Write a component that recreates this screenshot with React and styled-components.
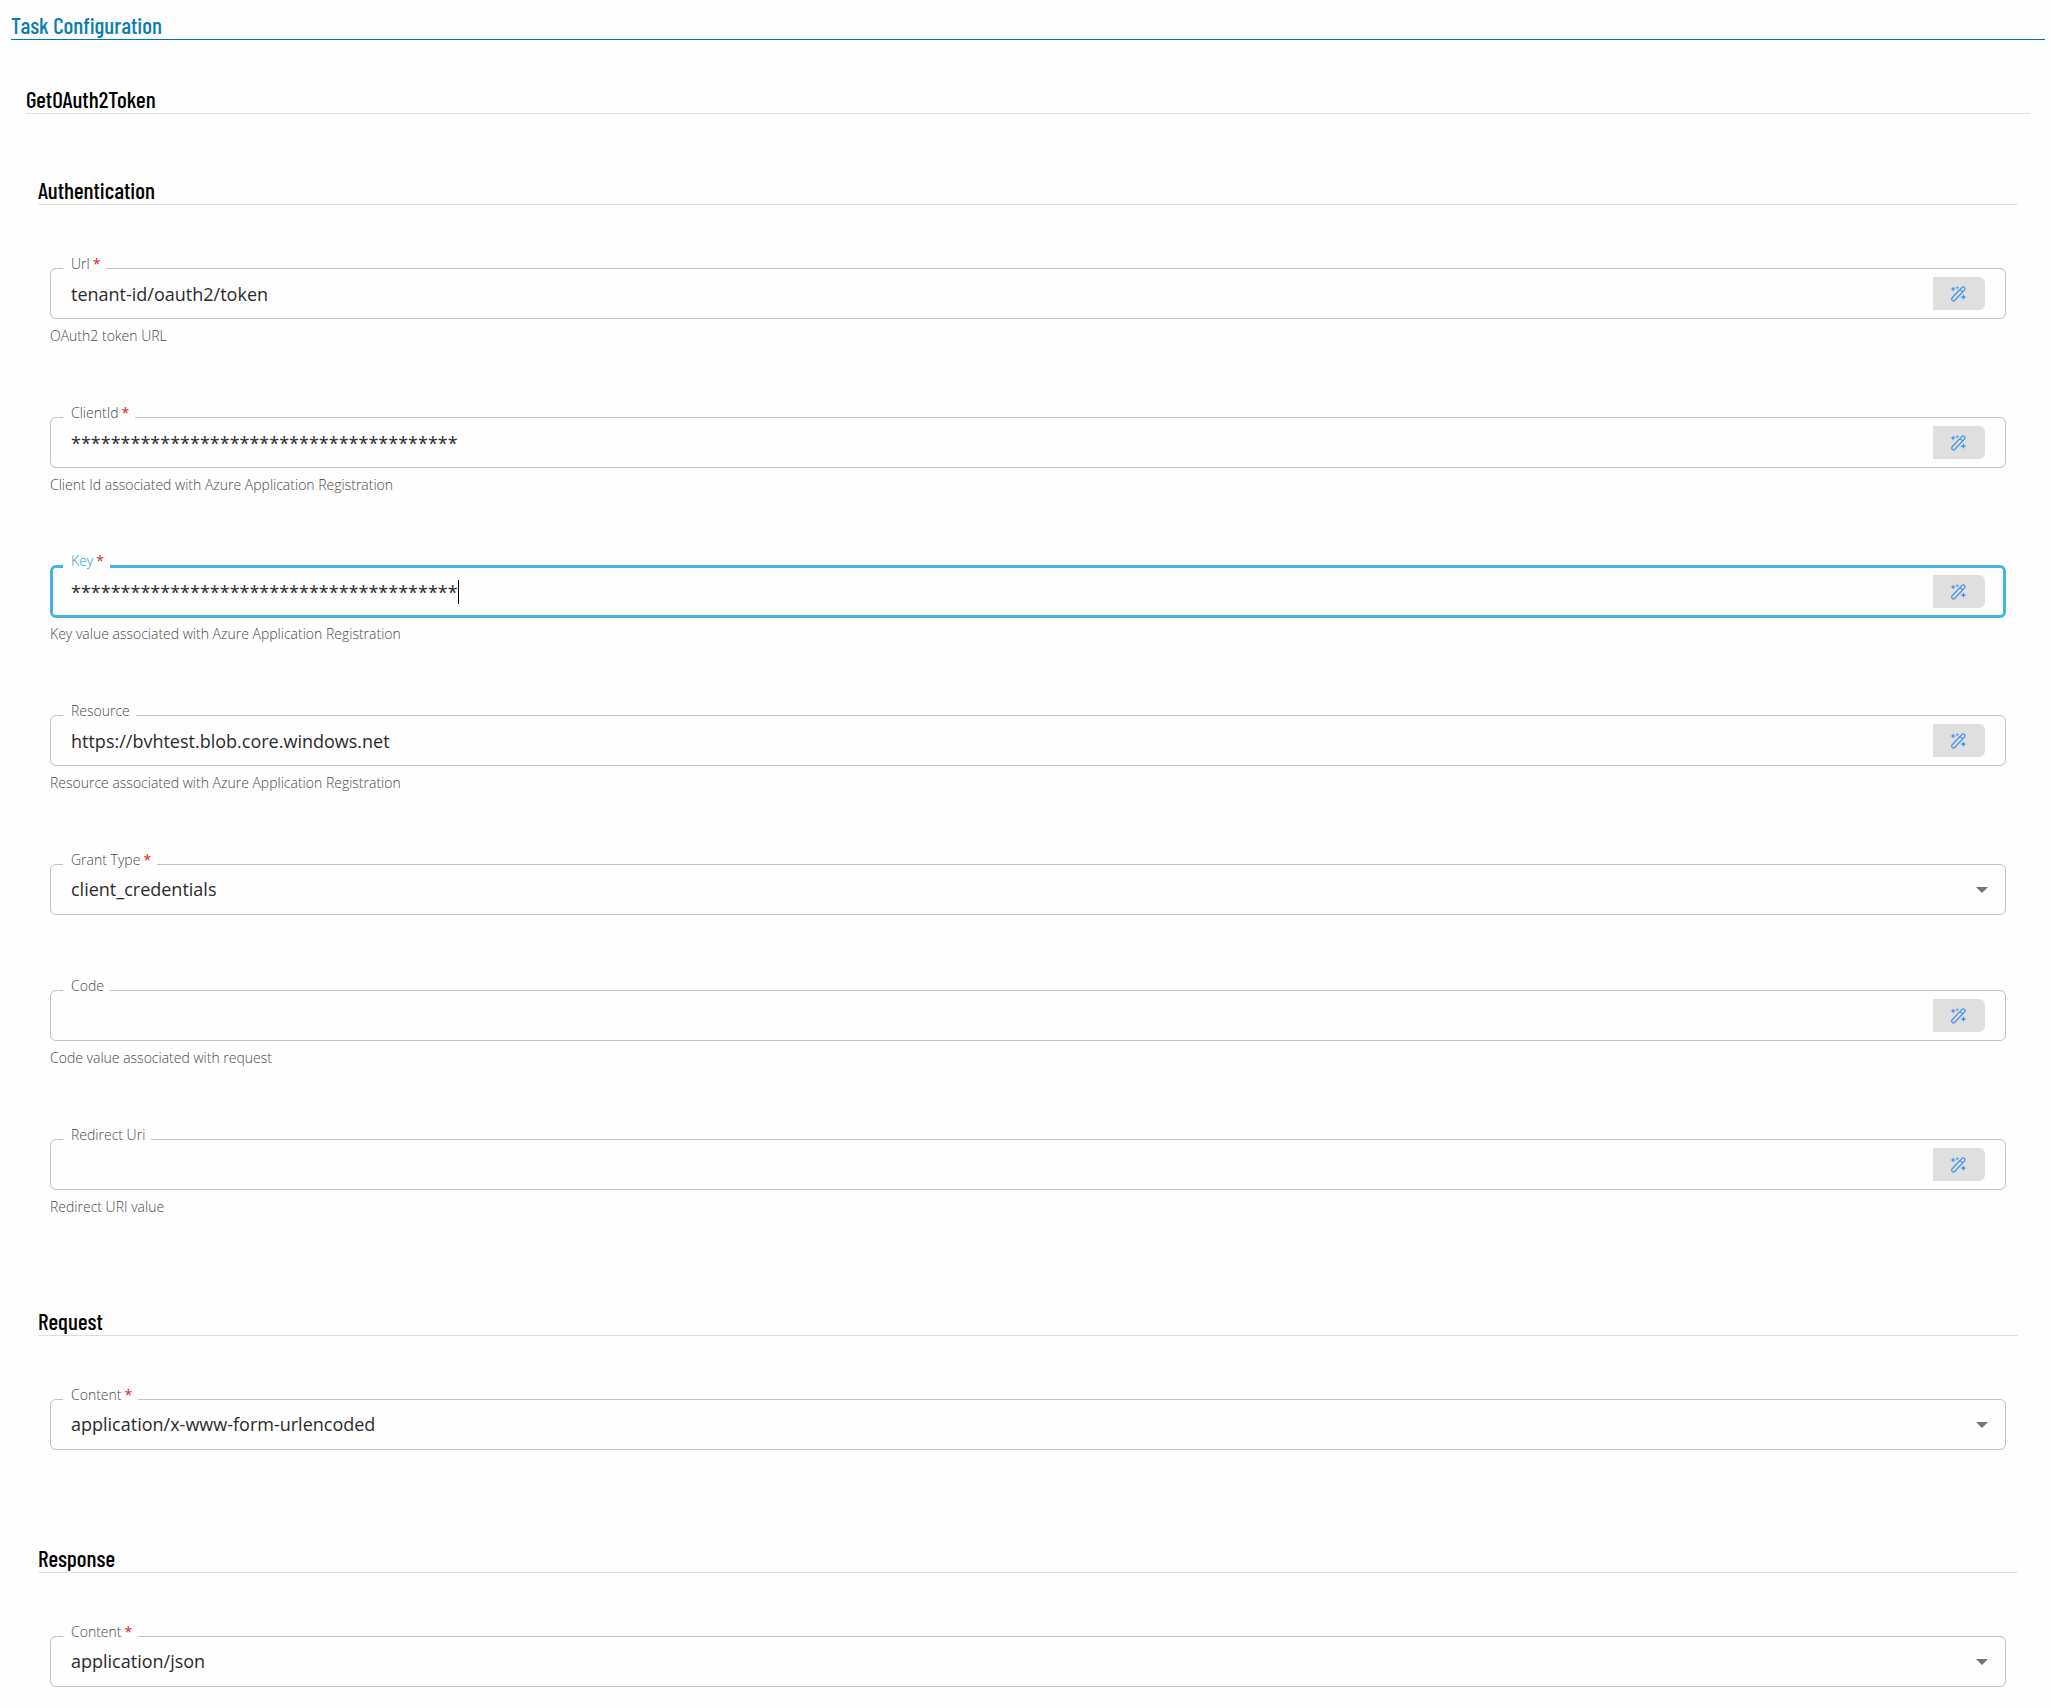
import React, { useState } from 'react';
import styled, { createGlobalStyle, css } from 'styled-components';

const authFields = [
    { id: 'url', label: 'Url', required: true, value: 'tenant-id/oauth2/token', hint: 'OAuth2 token URL' },
    { id: 'clientId', label: 'ClientId', required: true, value: '*'.repeat(39), hint: 'Client Id associated with Azure Application Registration' },
    { id: 'key', label: 'Key', required: true, value: '*'.repeat(39), hint: 'Key value associated with Azure Application Registration' },
    { id: 'resource', label: 'Resource', value: 'https://bvhtest.blob.core.windows.net', hint: 'Resource associated with Azure Application Registration' },
    { id: 'grantType', label: 'Grant Type', required: true, options: ['client_credentials', 'authorization_code'] },
    { id: 'code', label: 'Code', value: '', hint: 'Code value associated with request' },
    { id: 'redirectUri', label: 'Redirect Uri', value: '', hint: 'Redirect URI value' },
];

const requestFields = [
    { id: 'requestContent', label: 'Content', required: true, options: ['application/x-www-form-urlencoded', 'application/json'] },
];

const responseFields = [
    { id: 'responseContent', label: 'Content', required: true, options: ['application/json', 'application/xml'] },
];

const WandIcon = () => (
    <svg width="16" height="16" viewBox="0.4 0.3 16 16" fill="none" stroke="currentColor" strokeWidth="1.2" overflow="visible" aria-hidden="true">
        <rect x="-1.8" y="-8.8" width="3.6" height="17.6" rx="1.5" transform="translate(7.7 8.2) rotate(43)" />
        <path d="M9.6 3.9l2.7 2.5" />
        <path d="M2.5 .6l.7 2 2 .7-2 .7-.7 2-.7-2-2-.7 2-.7z" fill="currentColor" stroke="none" />
        <path d="M6.6 0l.5 1.5 1.5.5-1.5.5-.5 1.5-.5-1.5L4.6 2l1.5-.5z" fill="currentColor" stroke="none" />
        <path d="M12.8 8.5l.8 2.1 2.2.8-2.2.8-.8 2.1-.8-2.1-2.1-.8 2.1-.8z" fill="currentColor" stroke="none" />
    </svg>
);

function Field({ field, focused, onFocus }) {
    const [value, setValue] = useState(field.options ? field.options[0] : field.value);
    const hintId = field.hint ? field.id + '-hint' : undefined;
    const control = {
        id: field.id,
        value,
        required: field.required,
        onFocus: () => onFocus(field.id),
        onChange: e => setValue(e.target.value),
    };

    return (
        <div>
            <Outline $focused={focused}>
                <Label htmlFor={field.id} $focused={focused}>
                    {field.label}
                    {field.required && <Required>*</Required>}
                </Label>
                {field.options ? (
                    <React.Fragment>
                        <Select {...control}>
                            {field.options.map(option => <option key={option}>{option}</option>)}
                        </Select>
                        <Arrow width="12" height="6" viewBox="0 0 12 6" aria-hidden="true">
                            <path d="M0 0h12L6 6z" fill="currentColor" />
                        </Arrow>
                    </React.Fragment>
                ) : (
                    <React.Fragment>
                        <InputArea>
                            <Input {...control} type="text" autoComplete="off" aria-describedby={hintId} $focused={focused} />
                            {focused && <Caret />}
                        </InputArea>
                        <WandButton type="button" aria-label={'Insert value for ' + field.label}>
                            <WandIcon />
                        </WandButton>
                    </React.Fragment>
                )}
            </Outline>
            {field.hint && <Hint id={hintId}>{field.hint}</Hint>}
        </div>
    );
}

function Section({ title, fields, active, setActive }) {
    return (
        <SectionWrapper>
            <Heading as="h3">{title}</Heading>
            <FieldList>
                {fields.map(field => (
                    <Field key={field.id} field={field} focused={active === field.id} onFocus={setActive} />
                ))}
            </FieldList>
        </SectionWrapper>
    );
}

export default function App() {
    const [active, setActive] = useState('key');

    return (
        <Page>
            <GlobalStyle />
            <Heading as="h1" $primary>Task Configuration</Heading>
            <Task>
                <Heading as="h2">GetOAuth2Token</Heading>
                <Sections>
                    <Section title="Authentication" fields={authFields} active={active} setActive={setActive} />
                    <Section title="Request" fields={requestFields} active={active} setActive={setActive} />
                    <Section title="Response" fields={responseFields} active={active} setActive={setActive} />
                </Sections>
            </Task>
        </Page>
    );
}

const GlobalStyle = createGlobalStyle`
    *, *::before, *::after {
        box-sizing: border-box;
    }
    body {
        margin: 0;
        background: #fefefe;
        color: #2b2b2b;
        font-family: "Open Sans", "Noto Sans", sans-serif;
    }
`;

const Page = styled.main`
    padding: 11px 6px 20px 11px;
`;

const Heading = styled.h2`
    margin: 0;
    border-bottom: 1px solid ${props => props.$primary ? '#0077a6' : '#dedede'};
    color: ${props => props.$primary ? '#0e7cb0' : '#000'};
    font-family: "Barlow Condensed", "Liberation Sans Narrow", "Liberation Sans", sans-serif;
    font-size: 23px;
    font-weight: 500;
    line-height: 28px;
`;

const Task = styled.div`
    padding: 45px 15px 0;
`;

const Sections = styled.div`
    display: flex;
    flex-direction: column;
    gap: 94px;
    padding: 62px 12px 0;
`;

const SectionWrapper = styled.section`
    display: flex;
    flex-direction: column;
    gap: 63px;
`;

const FieldList = styled.div`
    display: flex;
    flex-direction: column;
    gap: 75px;
    padding: 0 12px;
`;

const Outline = styled.div`
    position: relative;
    display: flex;
    align-items: center;
    height: 51px;
    padding: 0 20px;
    border: 1px solid #c2c2c2;
    border-radius: 6px;

    ${props => props.$focused && css`
        height: 53px;
        margin: -1px 0;
        padding: 0 18px;
        border: 3px solid #41b6e6;
    `}
`;

/* sits on the border and cuts the notch in it */
const Label = styled.label`
    position: absolute;
    top: -15px;
    left: 12px;
    padding: 0 6px 0 8px;
    background: #fefefe;
    color: ${props => props.$focused ? '#1a9fd8' : '#4a4a4a'};
    font-size: 14px;
    font-weight: 300;
    line-height: 20px;

    ${props => props.$focused && css`
        top: -17px;
        left: 10px;
    `}
`;

const Required = styled.span`
    margin-left: 3px;
    color: #e0201c;
    font-weight: 400;
`;

const controlText = css`
    border: 0;
    outline: 0;
    padding: 0;
    background: transparent;
    color: #2b2b2b;
    font-family: inherit;
    font-size: 18px;
    line-height: 24px;
`;

const InputArea = styled.div`
    display: flex;
    align-items: center;
    flex: 1;
    min-width: 0;
`;

const Input = styled.input`
    ${controlText}
    width: 100%;

    ${props => props.$focused && css`
        width: auto;
        max-width: 100%;
        field-sizing: content;
        caret-color: transparent;
    `}
`;

const Caret = styled.span`
    width: 1px;
    height: 24px;
    background: #000;
`;

const WandButton = styled.button`
    display: flex;
    align-items: center;
    justify-content: center;
    width: 52px;
    height: 33px;
    padding: 0;
    border: 0;
    border-radius: 0 6px 6px 0;
    background: #dfdfdf;
    color: #3b8ff3;
    cursor: pointer;
`;

const Select = styled.select`
    ${controlText}
    flex: 1;
    min-width: 0;
    padding-bottom: 2px;
    appearance: none;
    cursor: pointer;
`;

const Arrow = styled.svg`
    position: absolute;
    right: 17px;
    color: #757575;
    pointer-events: none;
`;

const Hint = styled.div`
    padding-top: 10px;
    color: #4a4a4a;
    font-size: 14px;
    font-weight: 300;
    line-height: 13px;
`;
